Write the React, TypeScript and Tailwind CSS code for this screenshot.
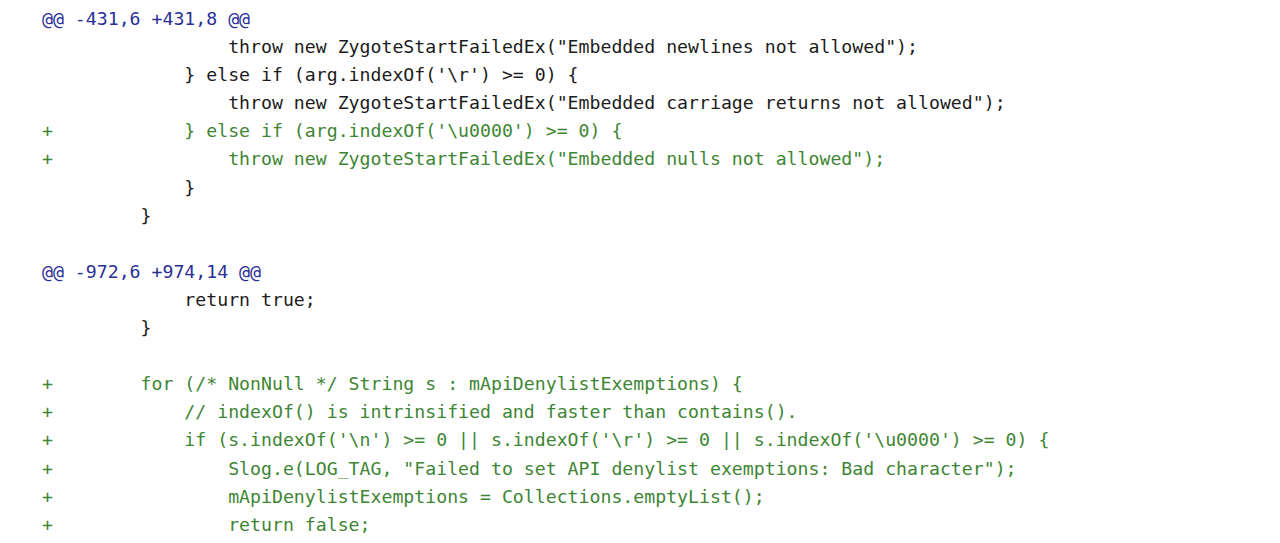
import React from "react";

type Kind = "hunk" | "ctx" | "add" | "blank";
const lines: [Kind, string][] = [
  ["hunk", "@@ -431,6 +431,8 @@"],
  ["ctx", "                 throw new ZygoteStartFailedEx(\"Embedded newlines not allowed\");"],
  ["ctx", "             } else if (arg.indexOf('\\r') >= 0) {"],
  ["ctx", "                 throw new ZygoteStartFailedEx(\"Embedded carriage returns not allowed\");"],
  ["add", "+            } else if (arg.indexOf('\\u0000') >= 0) {"],
  ["add", "+                throw new ZygoteStartFailedEx(\"Embedded nulls not allowed\");"],
  ["ctx", "             }"],
  ["ctx", "         }"],
  ["blank", " "],
  ["hunk", "@@ -972,6 +974,14 @@"],
  ["ctx", "             return true;"],
  ["ctx", "         }"],
  ["blank", " "],
  ["add", "+        for (/* NonNull */ String s : mApiDenylistExemptions) {"],
  ["add", "+            // indexOf() is intrinsified and faster than contains()."],
  ["add", "+            if (s.indexOf('\\n') >= 0 || s.indexOf('\\r') >= 0 || s.indexOf('\\u0000') >= 0) {"],
  ["add", "+                Slog.e(LOG_TAG, \"Failed to set API denylist exemptions: Bad character\");"],
  ["add", "+                mApiDenylistExemptions = Collections.emptyList();"],
  ["add", "+                return false;"],
];

const color: Record<Kind, string> = {
  hunk: "text-[#2a2f96]",
  ctx: "text-[#1c1c1c]",
  add: "text-[#3e8534]",
  blank: "text-[#1c1c1c]",
};

export default function App() {
  return (
    <div className="w-[1280px] h-[543px] overflow-hidden bg-white">
      <div
        className="pt-[5px] pl-[42px] text-[18.2px] leading-[28.1px] whitespace-pre"
        style={{ fontFamily: '"DejaVu Sans Mono", monospace' }}
      >
        {lines.map(([k, t], i) => (
          <div key={i} className={color[k]}>
            {t}
          </div>
        ))}
      </div>
    </div>
  );
}
